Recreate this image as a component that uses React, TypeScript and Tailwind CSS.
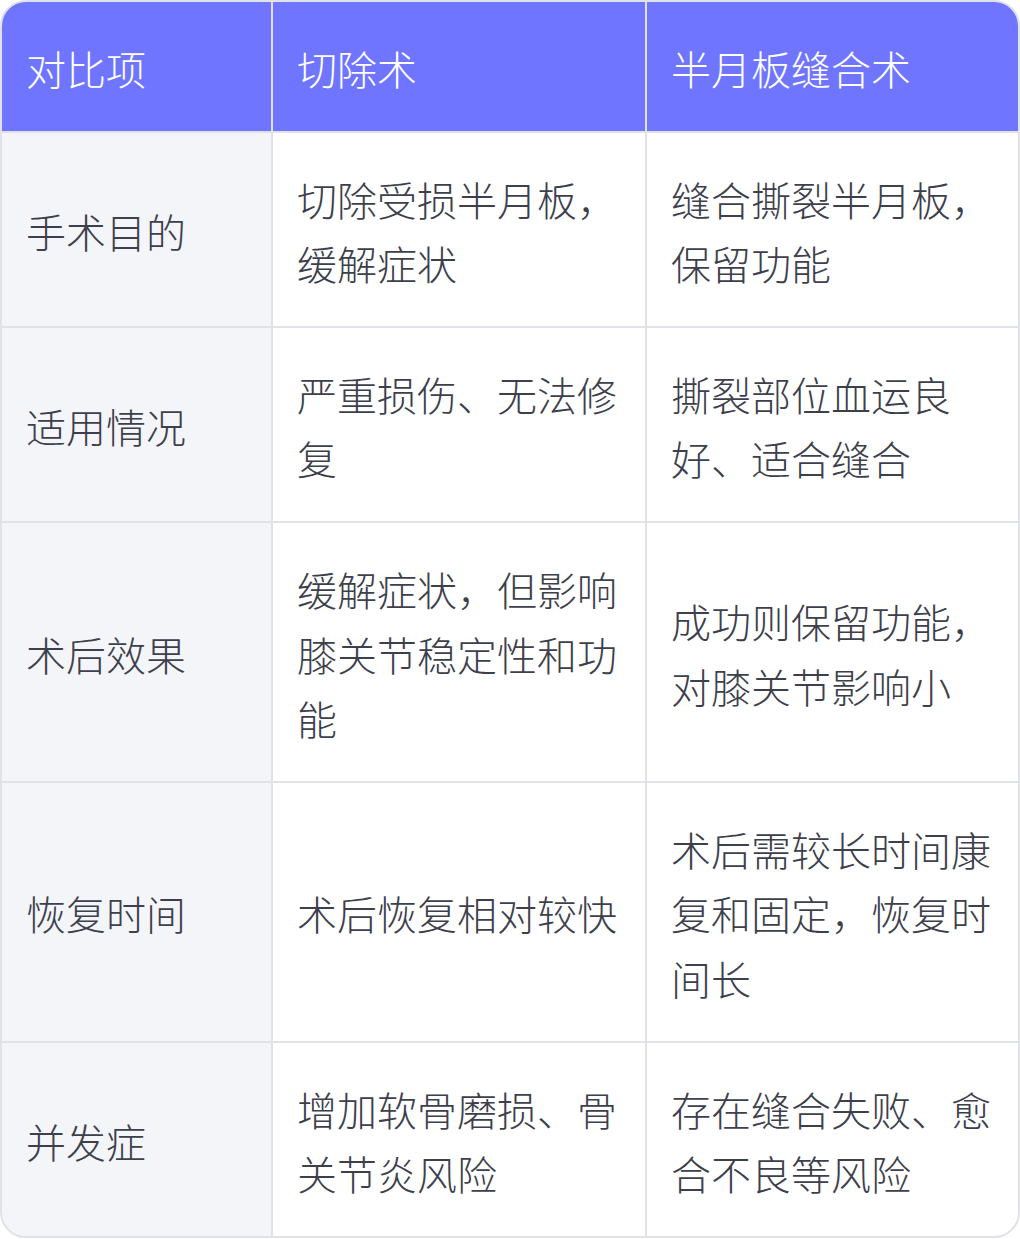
const header = ["对比项", "切除术", "半月板缝合术"];

const rows: [string, string, string][] = [
  ["手术目的", "切除受损半月板，缓解症状", "缝合撕裂半月板，保留功能"],
  ["适用情况", "严重损伤、无法修复", "撕裂部位血运良好、适合缝合"],
  ["术后效果", "缓解症状，但影响膝关节稳定性和功能", "成功则保留功能，对膝关节影响小"],
  ["恢复时间", "术后恢复相对较快", "术后需较长时间康复和固定，恢复时间长"],
  ["并发症", "增加软骨磨损、骨关节炎风险", "存在缝合失败、愈合不良等风险"],
];

const cell = "flex items-center px-[24px] pt-[34px] pb-[30px] leading-[64.6px]";

export default function App() {
  return (
    <div
      className="w-[1020px] overflow-hidden rounded-[26px] border-2 border-[#e1e2e7] bg-white text-[40px] font-light"
      style={{ fontFamily: '"Noto Sans CJK SC", "Noto Sans", sans-serif' }}
    >
      <div className="grid grid-cols-[269px_372px_1fr] gap-[2px] bg-[#e1e2e7]">
        {header.map((h) => (
          <div key={h} className={`${cell} bg-[#6f75ff] text-white`}>
            {h}
          </div>
        ))}
        {rows.map(([item, a, b]) => (
          <div key={item} className="contents">
            <div className={`${cell} bg-[#f4f5f9] text-[#3d404c]`}>{item}</div>
            <div className={`${cell} bg-white text-[#3d404c]`}>{a}</div>
            <div className={`${cell} bg-white text-[#3d404c]`}>{b}</div>
          </div>
        ))}
      </div>
    </div>
  );
}
